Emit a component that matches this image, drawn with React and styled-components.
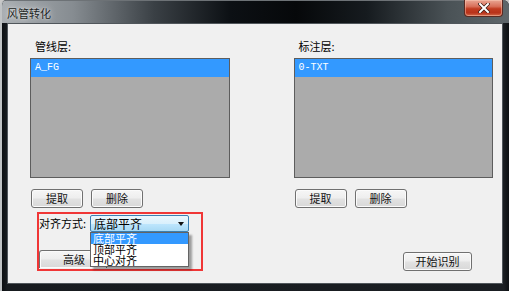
import React from 'react';
import styled, { createGlobalStyle } from 'styled-components';

const GlobalStyle = createGlobalStyle`
  html, body {
    margin: 0;
    padding: 0;
    background: #c9c9c9;
  }
  body {
    font-family: "Noto Sans CJK SC", "Liberation Sans", sans-serif;
    font-size: 11px;
    color: #000;
  }
`;

const Window = styled.div`
  width: 509px;
  height: 291px;
  box-sizing: border-box;
  display: flex;
  flex-direction: column;
  border-left: 2px solid #bfc2c4;
  background: linear-gradient(90deg, #0c0f12 0%, #171b1f 1%, #1a1e22 99%, #0c0f12 100%);
  border-radius: 6px 6px 0 0;
  overflow: hidden;
`;

const TitleBar = styled.div`
  height: 22px;
  display: flex;
  align-items: flex-start;
  background: linear-gradient(90deg, #a9aeb2 0%, #868c91 14%, #3a4045 30%, #0c1014 45%, #06080a 58%, #161b1f 72%, #4a5256 88%, #5f676b 100%);
  border-top: 1px solid #6d7276;
`;

const Caption = styled.span`
  margin: 5px 0 0 5px;
  line-height: 15px;
  font-size: 11px;
  color: #1b1f22;
  text-shadow: 0 0 6px rgba(255, 255, 255, 0.8), 0 0 2px rgba(255, 255, 255, 0.6);
`;

const CloseButton = styled.div`
  margin: -1px 6px 0 auto;
  width: 39px;
  height: 17px;
  box-sizing: border-box;
  border: 1px solid #5a2a22;
  border-top: none;
  border-radius: 0 0 4px 4px;
  background: linear-gradient(180deg, #e9a593 0%, #d8705a 40%, #c13b20 55%, #b8321a 80%, #d46a4a 100%);
  box-shadow: inset 0 0 0 1px rgba(255, 210, 190, 0.45);
  display: flex;
  align-items: center;
  justify-content: center;
`;

const Client = styled.div`
  flex: 1;
  margin: 0 6px 7px 5px;
  border: 1px solid #50565b;
  background: #f0f0f0;
  box-sizing: border-box;
  padding: 14px 9px 0 22px;
  display: flex;
  flex-direction: column;
`;

const Columns = styled.div`
  display: flex;
  gap: 64px;
`;

const LayerGroup = styled.div`
  width: 200px;
  display: flex;
  flex-direction: column;
`;

const FieldLabel = styled.div`
  line-height: 16px;
  padding-left: ${(p) => p.$indent || 0}px;
  white-space: nowrap;
`;

const ListBox = styled.div`
  margin-top: 4px;
  height: 120px;
  box-sizing: border-box;
  border: 1px solid #5d5d5d;
  background: #ababab;
`;

const ListItem = styled.div`
  height: 18px;
  line-height: 18px;
  padding-left: 4px;
  font-family: "Liberation Mono", "DejaVu Sans Mono", monospace;
  font-size: 10px;
  color: ${(p) => (p.$selected ? '#fff' : '#000')};
  background: ${(p) => (p.$selected ? '#3399ff' : 'transparent')};
`;

const ButtonRow = styled.div`
  margin-top: 11px;
  margin-left: 1px;
  display: flex;
  gap: 8px;
`;

const Button = styled.div`
  width: ${(p) => p.$width || 52}px;
  height: ${(p) => p.$height || 19}px;
  box-sizing: border-box;
  border: 1px solid #707070;
  border-radius: 3px;
  background: linear-gradient(180deg, #f6f6f6 0%, #eeeeee 48%, #e2e2e2 52%, #d8d8d8 100%);
  box-shadow: inset 0 0 0 1px #fbfbfb;
  display: flex;
  align-items: center;
  justify-content: center;
  font-size: 11px;
  line-height: 1;
  color: #111;
`;

const Footer = styled.div`
  margin-top: 4px;
  display: flex;
  align-items: flex-end;
`;

const Highlight = styled.div`
  margin-left: 7px;
  width: 166px;
  height: 59px;
  box-sizing: border-box;
  border: 2px solid #f03636;
  display: flex;
  flex-direction: column;
`;

const AlignRow = styled.div`
  margin-top: 1px;
  display: flex;
  align-items: center;
  position: relative;
  z-index: 2;
`;

const AlignLabel = styled.span`
  width: 51px;
  line-height: 17px;
  white-space: nowrap;
  overflow: hidden;
`;

const ComboWrap = styled.div`
  position: relative;
  width: 99px;
`;

const Combo = styled.div`
  height: 17px;
  box-sizing: border-box;
  border: 1px solid #3c7fb1;
  border-radius: 2px;
  background: linear-gradient(180deg, #eaf6fd 0%, #d9f0fc 50%, #bee6fd 52%, #a7d9f5 100%);
  display: flex;
  align-items: center;
  padding-left: 3px;
  font-size: 12px;
  line-height: 15px;
`;

const Arrow = styled.span`
  margin-left: auto;
  margin-right: 4px;
  width: 0;
  height: 0;
  border-left: 3.5px solid transparent;
  border-right: 3.5px solid transparent;
  border-top: 4px solid #111;
`;

const DropList = styled.div`
  position: absolute;
  top: 17px;
  left: 0;
  width: 99px;
  box-sizing: border-box;
  border: 1px solid #646464;
  background: #fff;
  box-shadow: 3px 3px 2px rgba(0, 0, 0, 0.35);
`;

const DropItem = styled.div`
  height: 11px;
  line-height: 11px;
  padding-left: 2px;
  font-size: 11px;
  color: ${(p) => (p.$selected ? '#fff' : '#000')};
  background: ${(p) => (p.$selected ? '#3399ff' : 'transparent')};
`;

const AdvancedButton = styled(Button)`
  margin-top: 18px;
  border-bottom: none;
  border-radius: 3px 3px 0 0;
  justify-content: flex-start;
  padding-left: 23px;
`;

const StartButton = styled(Button)`
  margin-left: auto;
  margin-right: 21px;
`;

const layers = [
  { label: '管线层:', item: 'A_FG' },
  { label: '标注层:', item: '0-TXT' },
];

const alignOptions = ['底部平齐', '顶部平齐', '中心对齐'];

export default function App() {
  return (
    <>
      <GlobalStyle />
      <Window>
        <TitleBar>
          <Caption>风管转化</Caption>
          <CloseButton>
            <svg width="12" height="10" viewBox="0 0 12 10">
              <path d="M2 1 L10 9 M10 1 L2 9" stroke="#3a1a14" strokeWidth="3.4" strokeLinecap="square" />
              <path d="M2 1 L10 9 M10 1 L2 9" stroke="#ffffff" strokeWidth="2" strokeLinecap="square" />
            </svg>
          </CloseButton>
        </TitleBar>
        <Client>
          <Columns>
            {layers.map((layer) => (
              <LayerGroup key={layer.label}>
                <FieldLabel $indent={5}>{layer.label}</FieldLabel>
                <ListBox>
                  <ListItem $selected>{layer.item}</ListItem>
                </ListBox>
                <ButtonRow>
                  <Button>提取</Button>
                  <Button>删除</Button>
                </ButtonRow>
              </LayerGroup>
            ))}
          </Columns>
          <Footer>
            <Highlight>
              <AlignRow>
                <AlignLabel>对齐方式:</AlignLabel>
                <ComboWrap>
                  <Combo>
                    底部平齐
                    <Arrow />
                  </Combo>
                  <DropList>
                    {alignOptions.map((opt, i) => (
                      <DropItem key={opt} $selected={i === 0}>{opt}</DropItem>
                    ))}
                  </DropList>
                </ComboWrap>
              </AlignRow>
              <AdvancedButton $width={68} $height={18}>高级</AdvancedButton>
            </Highlight>
            <StartButton $width={69} $height={19}>开始识别</StartButton>
          </Footer>
        </Client>
      </Window>
    </>
  );
}
